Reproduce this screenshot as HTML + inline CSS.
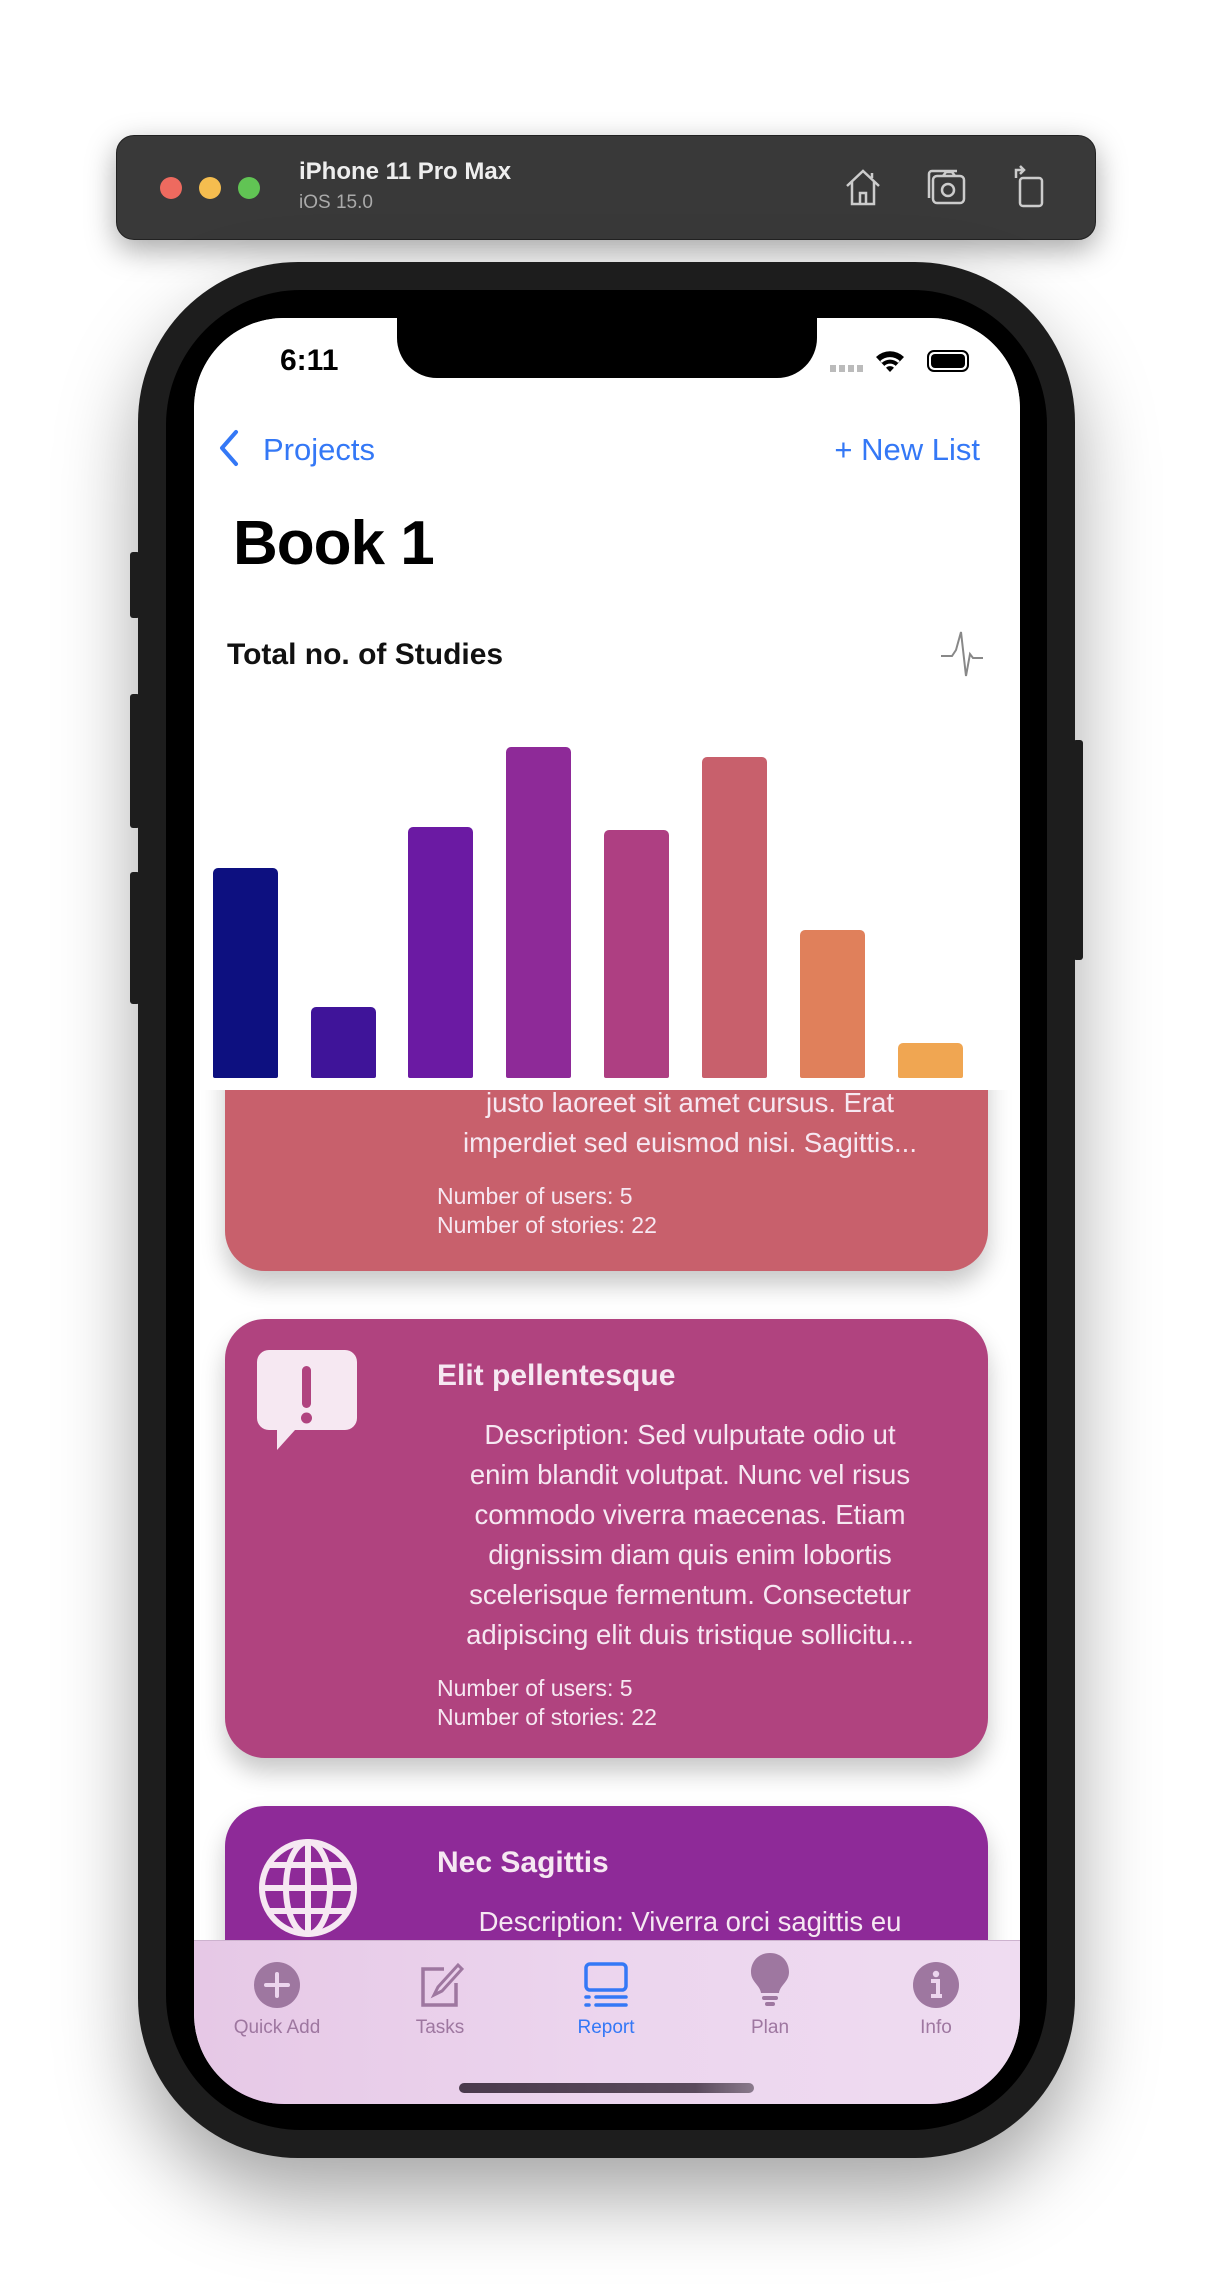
<!DOCTYPE html>
<html><head><meta charset="utf-8"><style>
*{margin:0;padding:0;box-sizing:border-box}
body{width:1212px;height:2284px;background:#fff;position:relative;overflow:hidden;font-family:"Liberation Sans",sans-serif}
.abs{position:absolute}
.tb{left:116px;top:135px;width:980px;height:105px;background:#393939;border-radius:18px;box-shadow:0 10px 30px rgba(0,0,0,.35);border:1px solid #222}
.dot{width:22px;height:22px;border-radius:50%;top:41px}
.body{left:138px;top:262px;width:937px;height:1896px;background:#1d1d1d;border-radius:160px;box-shadow:0 40px 80px rgba(0,0,0,.35)}
.bez{left:166px;top:290px;width:881px;height:1840px;background:#000;border-radius:135px}
.scr{left:194px;top:318px;width:826px;height:1786px;background:#fff;border-radius:90px;overflow:hidden}
.btn{background:#1d1d1d;width:10px;border-radius:3px}
.card{position:absolute;left:31px;width:763px;border-radius:40px;box-shadow:0 14px 24px rgba(0,0,0,.22);color:#f6e8f2}
.card .t{position:absolute;left:212px;font-size:30px;font-weight:bold}
.card .d{position:absolute;left:200px;width:530px;text-align:center;font-size:27.5px;line-height:40px;white-space:nowrap}
.card .n{position:absolute;left:212px;font-size:23px;line-height:29px}
.bar{position:absolute;width:65px;border-radius:5px 5px 2px 2px;bottom:12px}
.tab{position:absolute;top:0;width:160px;text-align:center;font-size:19px;color:#9e77a0}
.tab svg{display:block;margin:20px auto 0}
</style></head><body>
<div class="abs tb">
 <div class="abs dot" style="left:43px;background:#ee6a5f"></div>
 <div class="abs dot" style="left:82px;background:#f5bd4f"></div>
 <div class="abs dot" style="left:121px;background:#61c454"></div>
 <div class="abs" style="left:182px;top:22px;color:#eee;font-size:24px;font-weight:bold">iPhone 11 Pro Max</div>
 <div class="abs" style="left:182px;top:56px;color:#aaa;font-size:19px">iOS 15.0</div>
 <svg class="abs" style="left:726px;top:30px" width="40" height="42" viewBox="0 0 40 42" fill="none" stroke="#ccc" stroke-width="2.5"><path d="M4 20 L20 5 L36 20 M9 16 V38 H31 V16 M17 38 V27 H23 V38 M29 7 V12"/></svg>
 <svg class="abs" style="left:808px;top:32px" width="42" height="38" viewBox="0 0 42 38" fill="none" stroke="#ccc" stroke-width="2.5"><rect x="8" y="8" width="31" height="27" rx="4"/><path d="M4 30 V6 a3 3 0 0 1 3-3 H32"/><circle cx="23" cy="22" r="6"/><path d="M18 8 l3-4 h6 l3 4"/></svg>
 <svg class="abs" style="left:894px;top:28px" width="36" height="44" viewBox="0 0 36 44" fill="none" stroke="#ccc" stroke-width="2.5"><rect x="9" y="14" width="22" height="28" rx="3"/><path d="M5 14 V6 h8 M9 2 l4 4 -4 4"/></svg>
</div>
<div class="abs body"></div>
<div class="abs btn" style="left:130px;top:552px;height:66px"></div>
<div class="abs btn" style="left:130px;top:694px;height:134px"></div>
<div class="abs btn" style="left:130px;top:872px;height:132px"></div>
<div class="abs btn" style="left:1073px;top:740px;height:220px"></div>
<div class="abs bez"></div>
<div class="abs scr">
 <div class="card" style="top:560px;height:393px;background:#c8606c">
  <div class="d" style="top:205px">justo laoreet sit amet cursus. Erat</div>
  <div class="d" style="top:245px">imperdiet sed euismod nisi. Sagittis...</div>
  <div class="n" style="top:304px">Number of users: 5<br>Number of stories: 22</div>
 </div>
 <div class="card" style="top:1001px;height:439px;background:#b0437f">
  <svg class="abs" style="left:32px;top:31px" width="100" height="100" viewBox="0 0 100 100"><path d="M12 0 H88 a12 12 0 0 1 12 12 V68 a12 12 0 0 1-12 12 H38 L20 100 V80 H12 a12 12 0 0 1-12-12 V12 a12 12 0 0 1 12-12z" fill="#f6e8f2"/><rect x="45" y="16" width="9" height="42" rx="4.5" fill="#b0437f"/><circle cx="49.5" cy="68" r="5.5" fill="#b0437f"/></svg>
  <div class="t" style="top:40px">Elit pellentesque</div>
  <div class="d" style="top:96px">Description: Sed vulputate odio ut</div>
  <div class="d" style="top:136px">enim blandit volutpat. Nunc vel risus</div>
  <div class="d" style="top:176px">commodo viverra maecenas. Etiam</div>
  <div class="d" style="top:216px">dignissim diam quis enim lobortis</div>
  <div class="d" style="top:256px">scelerisque fermentum. Consectetur</div>
  <div class="d" style="top:296px">adipiscing elit duis tristique sollicitu...</div>
  <div class="n" style="top:355px">Number of users: 5<br>Number of stories: 22</div>
 </div>
 <div class="card" style="top:1488px;height:400px;background:#8e2a98">
  <svg class="abs" style="left:32px;top:31px" width="102" height="102" viewBox="0 0 102 102" fill="none" stroke="#f6e8f2" stroke-width="6"><circle cx="51" cy="51" r="46"/><ellipse cx="51" cy="51" rx="22" ry="46"/><path d="M51 5 V97 M5 51 H97 M12 28 H90 M12 74 H90"/></svg>
  <div class="t" style="top:40px">Nec Sagittis</div>
  <div class="d" style="top:96px">Description: Viverra orci sagittis eu</div>
 </div>
 <div class="abs" style="left:0;top:0;width:826px;height:772px;background:#fff">
  <div class="abs" style="left:86px;top:26px;font-size:30px;font-weight:bold">6:11</div>
  <div class="abs" style="left:203px;top:-2px;width:420px;height:62px;background:#000;border-radius:0 0 40px 40px"></div>
  <div class="abs" style="left:636px;top:47px;width:35px;height:7px;background:repeating-linear-gradient(90deg,#bbb 0 6px,transparent 6px 9px)"></div>
  <svg class="abs" style="left:680px;top:30px" width="32" height="26" viewBox="0 0 32 26"><path d="M16 24 L2 9 A20 20 0 0 1 30 9 Z" fill="#000"/><path d="M7 14 A13 13 0 0 1 25 14" stroke="#fff" stroke-width="2.5" fill="none"/><path d="M11 19 A7 7 0 0 1 21 19" stroke="#fff" stroke-width="2.5" fill="none"/></svg>
  <div class="abs" style="left:733px;top:32px;width:42px;height:22px;border:2px solid #000;border-radius:7px;padding:2px"><div style="width:100%;height:100%;background:#000;border-radius:4px"></div></div>
  <svg class="abs" style="left:24px;top:111px" width="22" height="38" viewBox="0 0 22 38"><path d="M18 3 L4 19 L18 35" stroke="#3478f6" stroke-width="4" fill="none" stroke-linecap="round" stroke-linejoin="round"/></svg>
  <div class="abs" style="left:69px;top:114px;font-size:31px;color:#3478f6">Projects</div>
  <div class="abs" style="right:40px;top:114px;font-size:31px;color:#3478f6">+ New List</div>
  <div class="abs" style="left:39px;top:190px;font-size:62px;font-weight:bold;letter-spacing:-1px">Book 1</div>
  <div class="abs" style="left:33px;top:320px;font-size:30px;font-weight:bold;color:#111">Total no. of Studies</div>
  <svg class="abs" style="left:746px;top:312px" width="44" height="48" viewBox="0 0 44 48" fill="none" stroke="#888" stroke-width="2"><path d="M1 26 H12 L16 20 L21 2 L26 46 L30 24 L33 28 H43"/></svg>
  <div class="bar" style="left:19px;height:210px;background:#0d1080"></div>
  <div class="bar" style="left:117px;height:71px;background:#3f1499"></div>
  <div class="bar" style="left:214px;height:251px;background:#6b1aa3"></div>
  <div class="bar" style="left:312px;height:331px;background:#8e2a98"></div>
  <div class="bar" style="left:410px;height:248px;background:#ae3f82"></div>
  <div class="bar" style="left:508px;height:321px;background:#c8606c"></div>
  <div class="bar" style="left:606px;height:148px;background:#e0805b"></div>
  <div class="bar" style="left:704px;height:35px;background:#f0a652"></div>
 </div>
 <div class="abs" style="left:0;top:1622px;width:826px;height:164px;background:linear-gradient(90deg,#e6c8e6,#ecd5ee 50%,#efdcf1);border-top:1px solid #cdb3cf">
  <div class="tab" style="left:3px"><svg width="48" height="48" viewBox="0 0 48 48"><circle cx="24" cy="24" r="23" fill="#9e77a0"/><path d="M24 13 V35 M13 24 H35" stroke="#ecd5ee" stroke-width="4" stroke-linecap="round"/></svg><div style="margin-top:8px">Quick Add</div></div>
  <div class="tab" style="left:166px"><svg width="48" height="48" viewBox="0 0 48 48" fill="none" stroke="#9e77a0" stroke-width="3.5"><path d="M28 8 H7 V44 H40 V22"/><path d="M18 34 L22 26 L42 4 L46 8 L26 30 Z" stroke-width="3"/></svg><div style="margin-top:8px">Tasks</div></div>
  <div class="tab" style="left:332px;color:#3478f6"><svg width="48" height="48" viewBox="0 0 48 48" fill="none" stroke="#3478f6" stroke-width="3.5"><rect x="4" y="3" width="40" height="26" rx="4"/><path d="M14 36 H44 M14 44 H44 M4 36 H7 M4 44 H7" stroke-linecap="round"/></svg><div style="margin-top:8px">Report</div></div>
  <div class="tab" style="left:496px"><svg width="40" height="54" viewBox="0 0 40 54" style="margin-top:12px"><path d="M20 0 C8 0 1 9 1 19 C1 29 10 32 11 40 H29 C30 32 39 29 39 19 C39 9 32 0 20 0Z" fill="#9e77a0"/><rect x="12" y="43" width="16" height="4" rx="2" fill="#9e77a0"/><rect x="15" y="49" width="10" height="4" rx="2" fill="#9e77a0"/></svg><div style="margin-top:10px">Plan</div></div>
  <div class="tab" style="left:662px"><svg width="48" height="48" viewBox="0 0 48 48"><circle cx="24" cy="24" r="23" fill="#9e77a0"/><circle cx="24" cy="13" r="3.2" fill="#ecd5ee"/><path d="M19 20 H26 V35 M19 35 H30" stroke="#ecd5ee" stroke-width="4" fill="none"/></svg><div style="margin-top:8px">Info</div></div>
  <div class="abs" style="left:265px;top:142px;width:295px;height:10px;border-radius:5px;background:linear-gradient(90deg,#4a3a4c,#5a4a5c 80%,#8a7a8c)"></div>
 </div>
</div>
</body></html>
